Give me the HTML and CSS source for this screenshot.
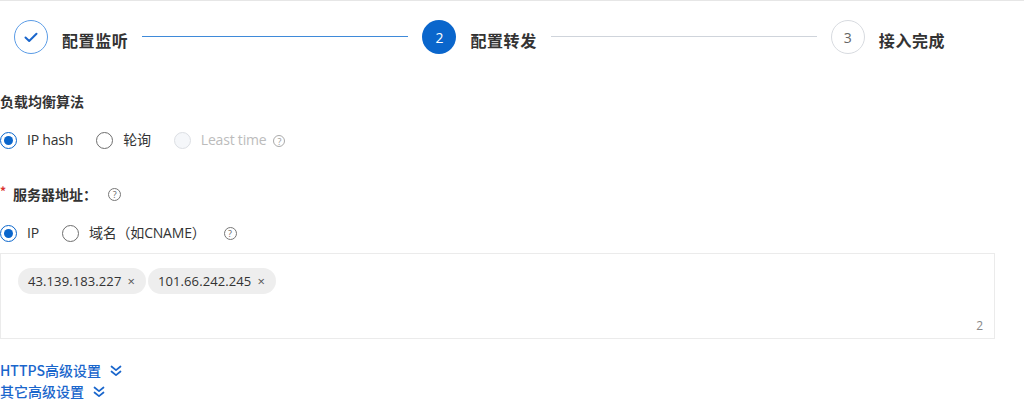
FILE: index.html
```html
<!DOCTYPE html>
<html lang="zh-CN">
<head>
<meta charset="utf-8">
<title>配置转发</title>
<link rel="stylesheet" href="styles.css">
</head>
<body>
<div class="page">
  <div class="steps">
    <div class="step-icon done">
      <svg width="14" height="11" viewBox="0 0 14 11"><polyline points="1.5,5.5 5.2,9 12.5,1.8" fill="none" stroke="#1a66cc" stroke-width="2" stroke-linecap="round" stroke-linejoin="round"/></svg>
    </div>
    <div class="step-title">配置监听</div>
    <div class="step-line active"></div>
    <div class="step-icon current">2</div>
    <div class="step-title">配置转发</div>
    <div class="step-line"></div>
    <div class="step-icon wait">3</div>
    <div class="step-title">接入完成</div>
  </div>

  <div class="label first">负载均衡算法</div>
  <div class="radios">
    <label class="radio"><span class="dot checked"></span><span class="rtext">IP hash</span></label>
    <label class="radio"><span class="dot"></span><span class="rtext">轮询</span></label>
    <label class="radio disabled"><span class="dot"></span><span class="rtext">Least time</span><span class="help small">?</span></label>
  </div>

  <div class="label second"><span class="req">*</span>服务器地址：<span class="help">?</span></div>
  <div class="radios">
    <label class="radio"><span class="dot checked"></span><span class="rtext">IP</span></label>
    <label class="radio"><span class="dot"></span><span class="rtext">域名（如CNAME）</span><span class="help gap">?</span></label>
  </div>

  <div class="tagbox">
    <div class="tags">
      <span class="tag">43.139.183.227<span class="x">×</span></span>
      <span class="tag">101.66.242.245<span class="x">×</span></span>
    </div>
    <div class="count">2</div>
  </div>

  <div class="links">
    <a class="more">HTTPS高级设置<svg class="chev" width="12" height="12" viewBox="0 0 12 12"><polyline points="1.5,1.5 6,5.2 10.5,1.5" fill="none" stroke="#1a66cc" stroke-width="1.7" stroke-linecap="round" stroke-linejoin="round"/><polyline points="1.5,6.5 6,10.2 10.5,6.5" fill="none" stroke="#1a66cc" stroke-width="1.7" stroke-linecap="round" stroke-linejoin="round"/></svg></a>
    <a class="more">其它高级设置<svg class="chev" width="12" height="12" viewBox="0 0 12 12"><polyline points="1.5,1.5 6,5.2 10.5,1.5" fill="none" stroke="#1a66cc" stroke-width="1.7" stroke-linecap="round" stroke-linejoin="round"/><polyline points="1.5,6.5 6,10.2 10.5,6.5" fill="none" stroke="#1a66cc" stroke-width="1.7" stroke-linecap="round" stroke-linejoin="round"/></svg></a>
  </div>
</div>
</body>
</html>
```

FILE: styles.css
```css
* { box-sizing: border-box; }
html, body { margin: 0; padding: 0; background: #fff; }
body {
  font-family: "Open Sans", "Noto Sans CJK SC", sans-serif;
  color: #333;
  font-size: 14px;
  width: 1024px;
  height: 402px;
  overflow: hidden;
}
.page {
  border-top: 1px solid #e6e6e6;
  display: flex;
  flex-direction: column;
}

/* steps */
.steps {
  display: flex;
  align-items: flex-start;
  padding: 19px 0 0 14px;
}
.step-icon {
  width: 34px;
  height: 34px;
  border-radius: 50%;
  display: flex;
  align-items: center;
  justify-content: center;
  font-size: 14px;
  flex: none;
}
.step-icon.done { border: 1px solid #5b9ce6; }
.step-icon.current { background: #0a66cc; color: #fff; }
.step-icon.wait { border: 1px solid #d8dbe0; color: #666; }
.step-title {
  margin: 9px 14px 0 14px;
  font-family: "Noto Sans CJK SC", sans-serif;
  font-weight: 700;
  font-size: 16px;
  line-height: 22px;
  color: #333;
  letter-spacing: 0.6px;
}
.step-line {
  width: 266px;
  height: 1px;
  margin: 16px 14px 0 0;
  background: #cfd4db;
}
.step-line.active { background: #3f8ad9; }

/* labels */
.label {
  font-family: "Noto Sans CJK SC", sans-serif;
  font-weight: 700;
  font-size: 14px;
  line-height: 22px;
  color: #333;
  display: flex;
  align-items: center;
}
.label.first { margin-top: 36px; }
.label.second { margin-top: 32px; }
.req { color: #d9302c; font-size: 12px; margin-right: 7px; align-self: flex-start; line-height: 16px; }

.radios {
  display: flex;
  align-items: center;
  margin-top: 17px;
  height: 22px;
}
.radio {
  display: flex;
  align-items: center;
  margin-right: 23px;
  color: #333;
}
.dot {
  width: 17px;
  height: 17px;
  border-radius: 50%;
  border: 1px solid #6e6e6e;
  background: #fff;
  margin-right: 10px;
  flex: none;
  position: relative;
}
.dot.checked { border-color: #0a66cc; }
.dot.checked::after {
  content: "";
  position: absolute;
  left: 3px;
  top: 3px;
  width: 9px;
  height: 9px;
  border-radius: 50%;
  background: #0a66cc;
}
.radio.disabled { color: #bcbcbc; }
.radio.disabled .dot { border-color: #dcdfe4; background: #f5f7fa; }
.rtext { line-height: 22px; letter-spacing: -0.2px; }

.help {
  display: inline-flex;
  align-items: center;
  justify-content: center;
  width: 13px;
  height: 13px;
  border: 1px solid #777;
  border-radius: 50%;
  font-family: "Open Sans", sans-serif;
  font-weight: 400;
  font-size: 9px;
  line-height: 1;
  color: #666;
  margin-left: 11px;
}
.help.small { width: 12px; height: 12px; margin-left: 7px; border-color: #aaa; color: #999; font-size: 9px; margin-top: 2px; }
.help.gap { margin-left: 18px; }

/* tag box */
.tagbox {
  margin-top: 9px;
  width: 995px;
  height: 86px;
  border: 1px solid #ebebeb;
  display: flex;
  flex-direction: column;
  justify-content: space-between;
  padding: 14px 11px 4px 17px;
}
.tags { display: flex; gap: 2px; }
.tag {
  height: 26px;
  border-radius: 13px;
  background: #eeeeee;
  padding: 0 11px 0 10px;
  font-size: 13px;
  line-height: 26px;
  color: #333;
  letter-spacing: 0.1px;
  display: inline-flex;
  align-items: center;
}
.tag .x { margin-left: 6px; font-size: 13px; color: #555; }
.count {
  align-self: flex-end;
  font-size: 12px;
  color: #888;
  line-height: 16px;
}

/* links */
.links {
  margin-top: 21px;
  display: flex;
  flex-direction: column;
}
.more {
  color: #1a66cc;
  font-family: "Noto Sans CJK SC", sans-serif;
  font-weight: 500;
  font-size: 14px;
  line-height: 21px;
  display: flex;
  align-items: center;
}
.chev { margin-left: 9px; }
```
